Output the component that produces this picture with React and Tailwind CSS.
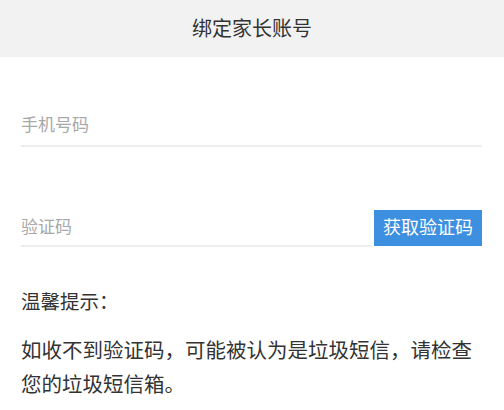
export default function App() {
    return (
        <div className="min-h-[410px] bg-white font-['Liberation_Sans','Noto_Sans_CJK_SC',sans-serif]">
            <header className="flex h-[57px] items-center justify-center bg-[#f2f2f2]">
                <h1 className="text-[20px] leading-none text-[#333]">绑定家长账号</h1>
            </header>

            <main className="px-[21px] pr-[22px]">
                <div className="mt-[50px] flex h-[40px] items-center border-b-2 border-[#eeeeee]">
                    <input
                        type="tel"
                        placeholder="手机号码"
                        className="w-full bg-transparent text-[17px] text-[#333] outline-none placeholder:text-[#a8a8a8]"
                    />
                </div>

                <div className="mt-[63px] flex h-[37px] items-stretch gap-[3px]">
                    <div className="flex flex-1 items-center border-b-2 border-[#eeeeee]">
                        <input
                            type="text"
                            placeholder="验证码"
                            className="w-full bg-transparent text-[17px] text-[#333] outline-none placeholder:text-[#a8a8a8]"
                        />
                    </div>
                    <button
                        type="button"
                        className="h-[36px] w-[108px] bg-[#3d8fe0] text-[18px] leading-none text-white"
                    >
                        获取验证码
                    </button>
                </div>

                <p className="mt-[40px] text-[19.5px] leading-[30px] text-[#333]">温馨提示：</p>
                <p className="mt-[17px] pr-[7px] text-[20.5px] leading-[34px] text-[#333]">
                    如收不到验证码，可能被认为是垃圾短信，请检查您的垃圾短信箱。
                </p>
            </main>
        </div>
    );
}
